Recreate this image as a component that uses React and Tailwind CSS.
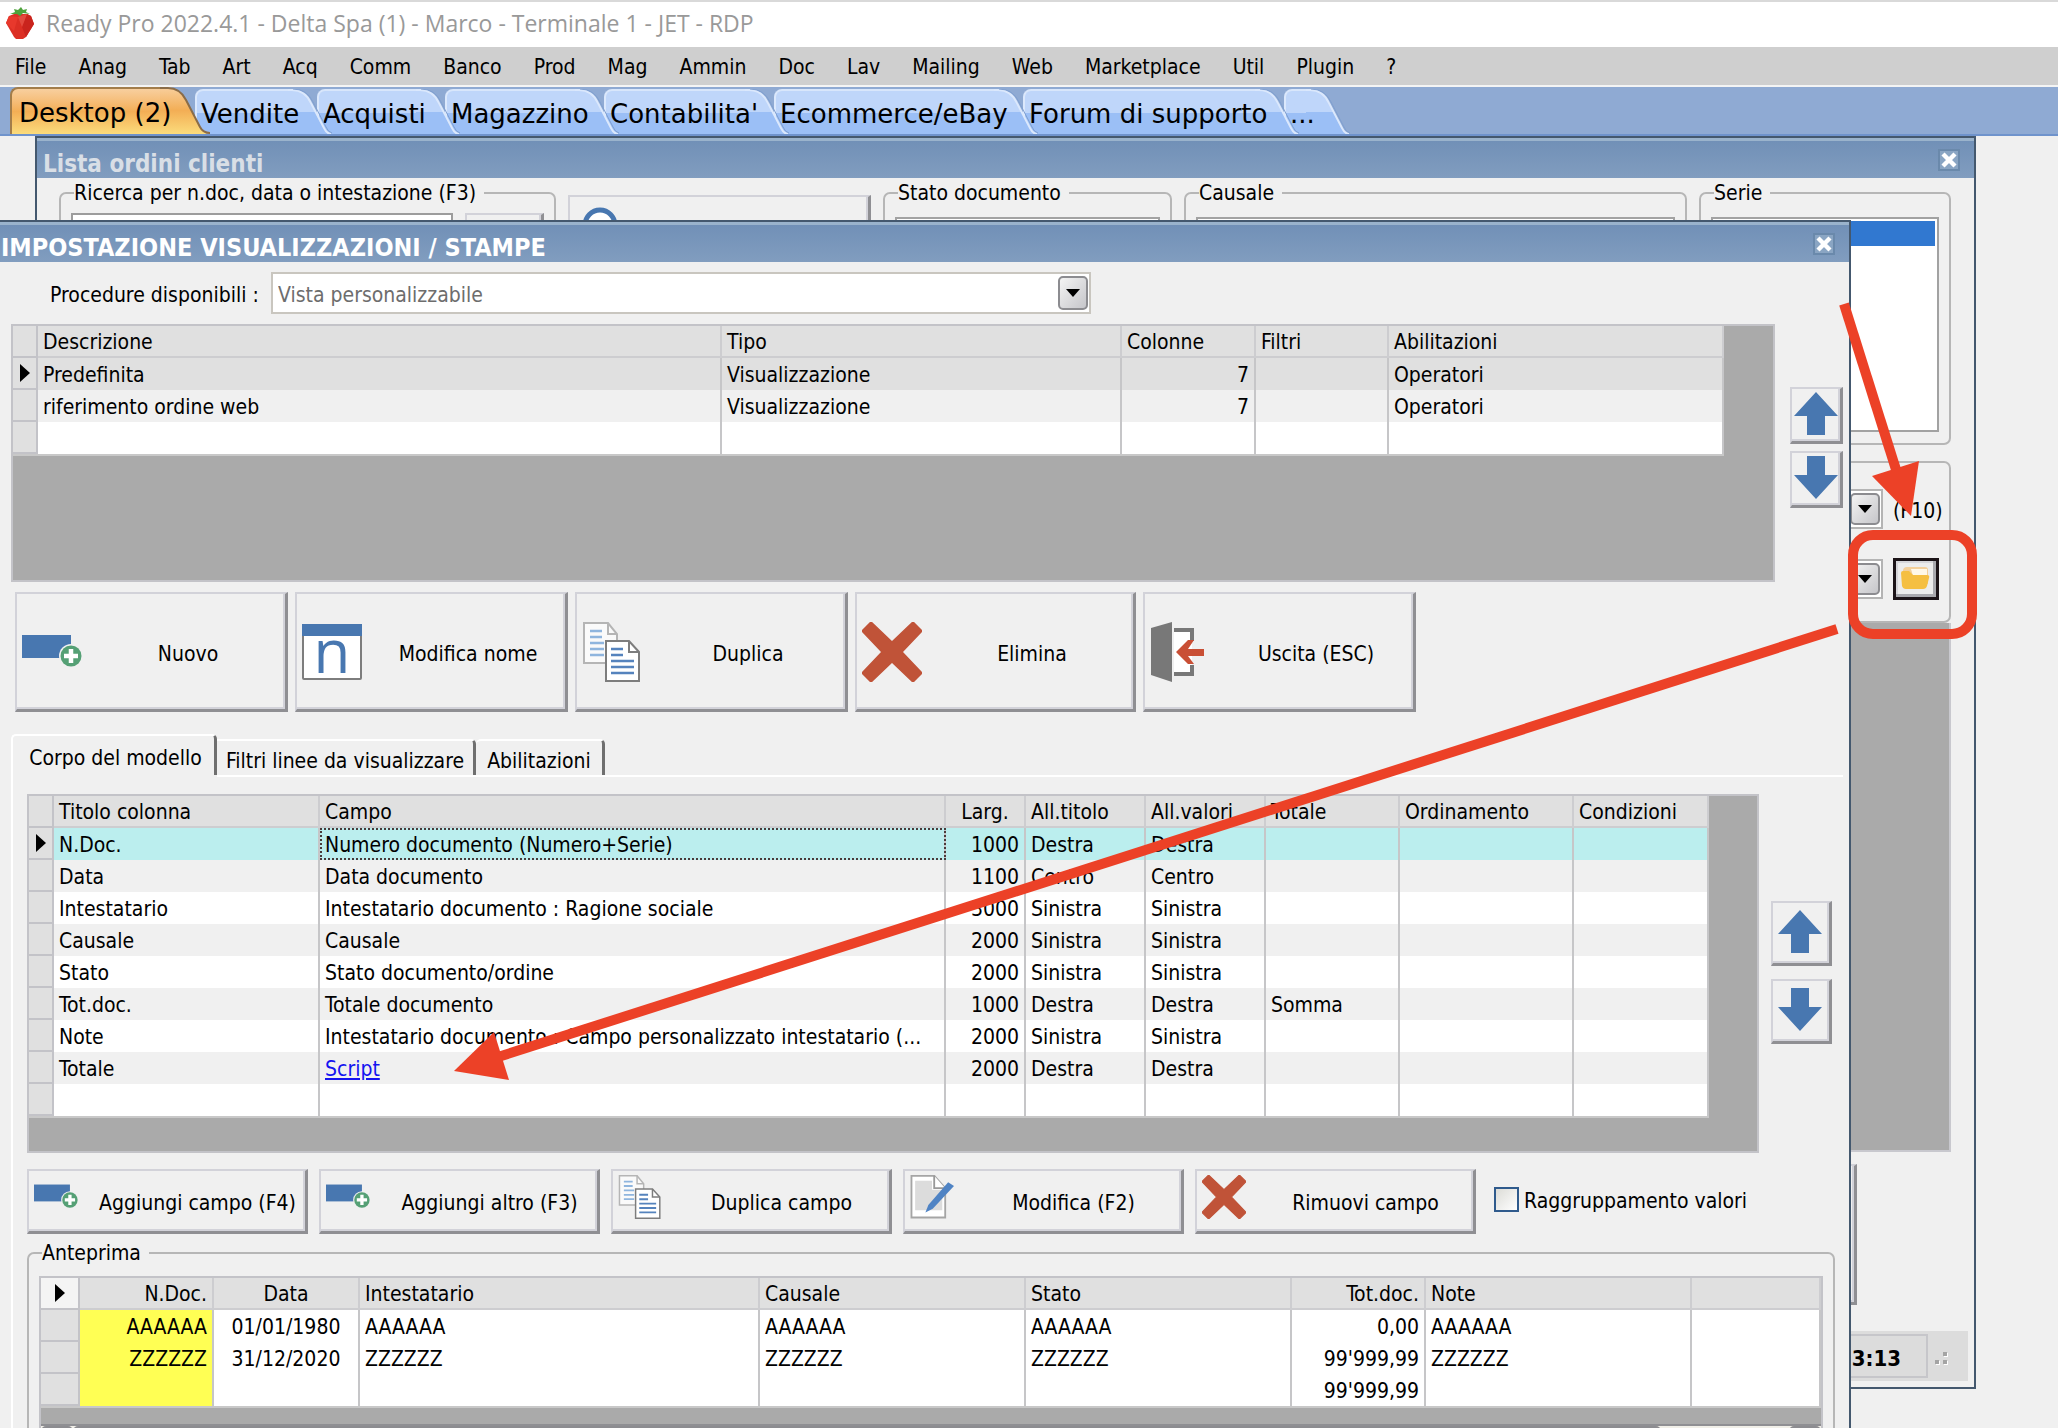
import React from "react";

const menu = ["File", "Anag", "Tab", "Art", "Acq", "Comm", "Banco", "Prod", "Mag", "Ammin", "Doc", "Lav", "Mailing", "Web", "Marketplace", "Util", "Plugin", "?"];

const tabs = [
  { label: "Vendite", width: "z-[8] w-[137px]" },
  { label: "Acquisti", width: "z-[7] w-[143px]" },
  { label: "Magazzino", width: "z-[6] w-[174px]" },
  { label: "Contabilita'", width: "z-[5] w-[185px]" },
  { label: "Ecommerce/eBay", width: "z-[4] w-[264px]" },
  { label: "Forum di supporto", width: "z-[3] w-[276px]" },
  { label: "...", width: "z-[2] w-[66px]" },
];

const views = [
  ["Predefinita", "Visualizzazione", "7", "", "Operatori"],
  ["riferimento ordine web", "Visualizzazione", "7", "", "Operatori"],
  ["", "", "", "", ""],
];

const fields = [
  ["N.Doc.", "Numero documento (Numero+Serie)", "1000", "Destra", "Destra", ""],
  ["Data", "Data documento", "1100", "Centro", "Centro", ""],
  ["Intestatario", "Intestatario documento : Ragione sociale", "3000", "Sinistra", "Sinistra", ""],
  ["Causale", "Causale", "2000", "Sinistra", "Sinistra", ""],
  ["Stato", "Stato documento/ordine", "2000", "Sinistra", "Sinistra", ""],
  ["Tot.doc.", "Totale documento", "1000", "Destra", "Destra", "Somma"],
  ["Note", "Intestatario documento : Campo personalizzato intestatario (...", "2000", "Sinistra", "Sinistra", ""],
  ["Totale", "Script", "2000", "Destra", "Destra", ""],
  ["", "", "", "", "", ""],
];

const preview = [
  ["AAAAAA", "01/01/1980", "AAAAAA", "AAAAAA", "AAAAAA", "0,00", "AAAAAA", ""],
  ["ZZZZZZ", "31/12/2020", "ZZZZZZ", "ZZZZZZ", "ZZZZZZ", "99'999,99", "ZZZZZZ", ""],
  ["", "", "", "", "", "99'999,99", "", ""],
];

/* ---------- icons ---------- */

function Strawberry() {
  return (
    <svg viewBox="0 0 28 32" className="h-8 w-7" aria-hidden="true">
      <path d="M3 9 L8 7 L21 7 L25 9 L28 17 L20 30 L17 32 L10 32 L8 30 L0 16 Z" fill="#dc2f24" />
      <path d="M3 9 L12 10 L8 24 L0 16 Z" fill="#e8382c" />
      <path d="M21 7 L25 9 L28 17 L20 30 L16 20 Z" fill="#c9241d" />
      <path d="M12 10 L21 7 L16 20 Z" fill="#e24a3e" />
      <path d="M4 7 L9 5 L8 2 L12 3 L15 0 L17 3 L21 2 L20 5 L24 7 L17 6 L14 9 L11 7 Z" fill="#4ea33c" />
    </svg>
  );
}

function NewIcon({ className }) {
  return (
    <svg viewBox="0 0 60 60" className={className} aria-hidden="true">
      <rect x="0" y="13" width="49" height="23" fill="#4877b0" />
      <circle cx="49" cy="34" r="12" fill="#f0f0f0" />
      <circle cx="49" cy="34" r="10.5" fill="#55a075" />
      <path d="M49 27v14M42 34h14" stroke="#fff" strokeWidth="4.5" />
    </svg>
  );
}

function RenameIcon({ className }) {
  return (
    <svg viewBox="0 0 60 60" className={className + " overflow-visible"} aria-hidden="true">
      <rect x="1" y="3" width="58" height="54" rx="1" fill="#fff" stroke="#7d7d7d" strokeWidth="2" />
      <rect x="0" y="2" width="60" height="12" fill="#4877b0" />
      <text x="30" y="51" textAnchor="middle" className="font-['Open_Sans','Noto_Sans',sans-serif] text-[60px] font-medium" fill="#4877b0">n</text>
    </svg>
  );
}

function CopyIcon({ className }) {
  return (
    <svg viewBox="0 0 60 60" className={className} aria-hidden="true">
      <path d="M2 1H26L35 12V41H2Z" fill="#fafafa" stroke="#b5b5b5" strokeWidth="2" />
      <path d="M26 1V12H35" fill="none" stroke="#b5b5b5" strokeWidth="2" />
      <path d="M8 9h12M8 15h12M8 21h14M8 27h14M8 33h14" stroke="#8fb5de" strokeWidth="2.4" />
      <path d="M24 19H47L57 30V59H24Z" fill="#fff" stroke="#7d7d7d" strokeWidth="2" />
      <path d="M47 19V30H57" fill="none" stroke="#7d7d7d" strokeWidth="2" />
      <path d="M29 27h12M29 33h12M29 39h23M29 45h23M29 51h23" stroke="#5583bd" strokeWidth="2.6" />
    </svg>
  );
}

function CrossIcon({ className }) {
  return (
    <svg viewBox="0 0 60 60" className={className} aria-hidden="true">
      <path d="M9 0L30 20L51 0L60 9L40 30L60 51L51 60L30 40L9 60L0 51L20 30L0 9Z" fill="#c05338" stroke="#c05338" strokeWidth="1.5" />
    </svg>
  );
}

function ExitIcon({ className }) {
  return (
    <svg viewBox="0 0 60 60" className={className} aria-hidden="true">
      <path d="M24 6H42V54H24Z" fill="#fff" />
      <path d="M24 8H42V19M42 43V52H24" fill="none" stroke="#787878" strokeWidth="4" />
      <path d="M1 6L22 0V60L1 53Z" fill="#787878" />
      <path d="M26 30L38 18H44L38 27H54V34H38L44 42H38Z" fill="#c94f35" />
    </svg>
  );
}

function EditIcon({ className }) {
  return (
    <svg viewBox="0 0 60 60" className={className} aria-hidden="true">
      <path d="M2 1H33L48 18V58H2Z" fill="#fff" stroke="#a5a5a5" strokeWidth="2.5" />
      <path d="M7 8H30V20H44V48H7Z" fill="#dcdcdc" />
      <path d="M33 1V18H48" fill="#fff" stroke="#999" strokeWidth="2.5" />
      <path d="M52 10L60 15L31 46L21 51L25 41Z" fill="#4f83c4" />
    </svg>
  );
}

function MoveArrow({ down }) {
  return (
    <svg viewBox="0 0 44 43" className={down ? "h-[43px] w-11 rotate-180" : "h-[43px] w-11"} aria-hidden="true">
      <path d="M22 0L44 24H31V43H13V24H0Z" fill="#4877b0" />
    </svg>
  );
}

function FolderIcon() {
  return (
    <svg viewBox="0 0 30 24" className="h-6 w-[30px]" aria-hidden="true">
      <path d="M3 5Q3 1 7 1H25Q28 1 28 4V18H3Z" fill="#f3cf9a" />
      <path d="M11 3H27V10H13Z" fill="#fff8e8" />
      <path d="M1 7Q1 5 3 5H9L13 9H27Q30 9 29 12L27 20Q26 23 23 23H6Q3 23 2 20Z" fill="#f5bf42" />
    </svg>
  );
}

function RowMarker() {
  return (
    <svg viewBox="0 0 10 18" className="mx-auto h-[18px] w-[10px]" aria-hidden="true">
      <path d="M0 0L10 9L0 18Z" fill="#000" />
    </svg>
  );
}

/* ---------- shared parts ---------- */

const raised = "border-t-2 border-l-2 border-r-[3px] border-b-[3px] border-t-[#d2d2d9] border-l-[#d2d2d9] border-r-[#8f8f93] border-b-[#8f8f93] bg-[#f0f0f0] shadow-[inset_-2px_-2px_0_#d2d2d9]";

function TitleBar({ title, className }) {
  return (
    <header className="flex h-10 items-center justify-between border-t-[3px] border-[#9ab3cc] bg-linear-to-b from-[#7190b7] to-[#819dbf] pr-[14px]">
      <h2 className={"pt-2 font-bold whitespace-nowrap " + className}>{title}</h2>
      <button type="button" aria-label={"Chiudi " + title} className="flex h-[22px] w-[22px] items-center justify-center border-2 border-[#6a89ab] bg-[#8aa5c3]">
        <svg viewBox="0 0 16 16" className="h-4 w-4" aria-hidden="true">
          <path d="M2 2L14 14M14 2L2 14" stroke="#fff" strokeWidth="4.4" />
        </svg>
      </button>
    </header>
  );
}

function DropButton({ label, className }) {
  return (
    <button type="button" aria-label={label} className={"flex shrink-0 items-center justify-center rounded-[5px] border-2 border-[#8c8c90] bg-linear-to-br from-[#f4f4f4] to-[#c6c6ca] " + className}>
      <svg viewBox="0 0 14 8" className="h-2 w-[14px]" aria-hidden="true">
        <path d="M0 0H14L7 8Z" fill="#000" />
      </svg>
    </button>
  );
}

function Group({ legend, className, children }) {
  return (
    <fieldset className={"min-w-0 rounded-[7px] border-2 border-[#b6b6b6] px-[10px] " + className}>
      {legend && <legend className="ml-[3px] pr-2 leading-6">{legend}</legend>}
      {children}
    </fieldset>
  );
}

function BigButton({ icon: Icon, label, width = "w-[273px]" }) {
  return (
    <button type="button" className={"flex h-[120px] items-center pl-[5px] " + width + " " + raised}>
      <Icon className="h-[60px] w-[60px] shrink-0" />
      <span className="flex-1 pt-[5px] pl-[9px] text-center">{label}</span>
    </button>
  );
}

function SmallButton({ icon: Icon, label }) {
  return (
    <button type="button" className={"flex h-[65px] w-[281px] items-center pl-[5px] " + raised}>
      <Icon className="mt-1 h-11 w-11 shrink-0 self-start" />
      <span className="flex-1 pt-[3px] pl-[12px] text-center whitespace-nowrap">{label}</span>
    </button>
  );
}

function MoveButtons({ className, size, what }) {
  return (
    <div className={"flex shrink-0 flex-col " + className}>
      <button type="button" aria-label={"Sposta su " + what} className={"flex items-center justify-center pb-[3px] " + size + " " + raised}>
        <MoveArrow />
      </button>
      <button type="button" aria-label={"Sposta giù " + what} className={"flex items-center justify-center pb-[3px] " + size + " " + raised}>
        <MoveArrow down />
      </button>
    </div>
  );
}

const th = "h-8 border-r-2 border-b-2 border-[#cdcdd0] bg-[#e0e0e0] px-[5px] pt-[2px] font-normal";
const td = "h-8 border-r-2 border-[#c6c6c8] px-[5px] pt-[2px] whitespace-nowrap";
const rowHead = "h-8 border-r-2 border-b-2 border-[#c3c3c8] bg-[#e0e0e0] p-0";
const tableBase = "table-fixed border-separate border-spacing-0 border-b-2 border-[#c8c8c8] leading-6";

/* ---------- windows ---------- */

function OrdersWindow() {
  return (
    <section className="absolute top-0 right-[82px] left-[35px] border-2 border-[#44586e] bg-[#f0f0f0]">
      <TitleBar title="Lista ordini clienti" className="pl-[6px] text-[24px] text-[#d9dfe6]" />
      <div className="pt-[3px] pr-[23px] pl-[22px]">
        <div className="flex gap-3">
          <Group legend="Ricerca per n.doc, data o intestazione (F3)" className="h-[264px] w-[497px] shrink-0">
            <div className="flex gap-3 pt-2">
              <input aria-label="Ricerca" className="h-9 w-[385px] border-2 border-[#9c9c9c] bg-white" />
              <button type="button" aria-label="Cerca" className={"h-9 w-[80px] " + raised} />
            </div>
          </Group>
          <button type="button" aria-label="Avvia ricerca" className={"mt-[14px] flex h-[250px] w-[303px] shrink-0 items-start pt-[10px] pl-3 " + raised}>
            <svg viewBox="0 0 36 36" className="h-9 w-9" aria-hidden="true">
              <circle cx="18" cy="18" r="15" fill="#fff" stroke="#4877b0" strokeWidth="5" />
            </svg>
          </button>
          <Group legend="Stato documento" className="h-[264px] w-[289px] shrink-0">
            <div className="mt-3 h-[215px] border-2 border-[#a2a2a2] bg-white" />
          </Group>
          <Group legend="Causale" className="h-[264px] flex-1">
            <div className="mt-3 h-[215px] border-2 border-[#a2a2a2] bg-white" />
          </Group>
          <Group legend="Serie" className="h-[264px] w-[252px] shrink-0">
            <div className="mt-3 h-[215px] border-2 border-[#a2a2a2] bg-white p-[2px]">
              <div className="h-[25px] bg-[#3178d0]" />
            </div>
          </Group>
        </div>
        <Group className="mt-4 flex h-[162px] flex-col gap-[30px] pt-[26px]">
          <div className="flex h-10 items-center gap-[10px]">
            <div className="flex h-10 flex-1 items-center justify-end border-2 border-[#b4b4b4] bg-white pr-[1px]">
              <DropButton label="Apri elenco stampe" className="h-8 w-[30px]" />
            </div>
            <span className="w-[46px] pt-[3px] whitespace-nowrap">(F10)</span>
          </div>
          <div className="flex h-10 items-center gap-[10px]">
            <div className="flex h-10 flex-1 items-center justify-end border-2 border-[#b4b4b4] bg-white pr-[1px]">
              <DropButton label="Apri elenco viste" className="h-8 w-[30px]" />
            </div>
            <button type="button" aria-label="Apri impostazioni vista" className="flex h-[42px] w-[46px] items-center justify-center border-[3px] border-[#1c1418] bg-[#ececec] pr-[2px] pb-[3px] shadow-[inset_-3px_-3px_0_#a9a9ae,inset_2px_2px_0_#d6d6da]">
              <FolderIcon />
            </button>
          </div>
        </Group>
        <div className="h-[529px] border-r-2 border-b-2 border-[#c8c8ce] bg-[#aaaaaa]" />
        <button type="button" aria-label="Azioni" className={"mt-3 block h-[141px] w-[1798px] " + raised} />
      </div>
      <footer className="mx-[6px] mt-[26px] mb-[6px] flex h-[50px] items-center justify-end bg-[#dcdcdc]">
        <span className="flex h-11 w-[200px] items-center justify-end border-2 border-[#c6c6ca] pt-[6px] pr-[25px] text-[22px] font-bold">13:13</span>
        <svg viewBox="0 0 40 20" className="h-5 w-10" aria-hidden="true">
          <path d="M8 15h4v4h-4zM16 7h4v4h-4zM16 15h4v4h-4z" fill="#fff" />
          <path d="M7 14h4v4h-4zM15 6h4v4h-4zM15 14h4v4h-4z" fill="#a4a4a4" />
        </svg>
      </footer>
    </section>
  );
}

function ViewsTable() {
  return (
    <div className="h-[258px] flex-1 border-2 border-[#c3c3c8] bg-[#aaaaaa]">
      <table className={tableBase}>
        <colgroup>
          <col className="w-[25px]" /><col className="w-[684px]" /><col className="w-[400px]" /><col className="w-[134px]" /><col className="w-[133px]" /><col className="w-[335px]" />
        </colgroup>
        <thead>
          <tr className="text-left">
            <td className={rowHead} />
            <th className={th}>Descrizione</th><th className={th}>Tipo</th><th className={th}>Colonne</th><th className={th}>Filtri</th><th className={th}>Abilitazioni</th>
          </tr>
        </thead>
        <tbody>
          {views.map((r, i) => (
            <tr key={i} className={i === 0 ? "bg-[#e0e0e0]" : i === 1 ? "bg-[#f0f0f0]" : "bg-white"}>
              <td className={rowHead}>{i === 0 && <RowMarker />}</td>
              {r.map((c, j) => (
                <td key={j} className={j === 2 ? td + " text-right" : td}>{c}</td>
              ))}
            </tr>
          ))}
        </tbody>
      </table>
    </div>
  );
}

function FieldsTable() {
  return (
    <div className="h-[359px] flex-1 border-2 border-[#c3c3c8] bg-[#aaaaaa]">
      <table className={tableBase}>
        <colgroup>
          <col className="w-[25px]" /><col className="w-[266px]" /><col className="w-[626px]" /><col className="w-[80px]" /><col className="w-[120px]" /><col className="w-[120px]" /><col className="w-[134px]" /><col className="w-[174px]" /><col className="w-[135px]" />
        </colgroup>
        <thead>
          <tr className="text-left">
            <td className={rowHead} />
            <th className={th}>Titolo colonna</th><th className={th}>Campo</th><th className={th + " text-center"}>Larg.</th><th className={th}>All.titolo</th><th className={th}>All.valori</th><th className={th}>Totale</th><th className={th}>Ordinamento</th><th className={th}>Condizioni</th>
          </tr>
        </thead>
        <tbody>
          {fields.map((r, i) => (
            <tr key={i} className={i === 0 ? "bg-[#bbeeee]" : i % 2 ? "bg-[#f0f0f0]" : "bg-white"}>
              <td className={rowHead}>{i === 0 && <RowMarker />}</td>
              <td className={td}>{r[0]}</td>
              <td className={i === 0 ? td + " outline-2 -outline-offset-2 outline-dotted outline-[#4a3a3a]" : td}>
                {r[1] === "Script" ? <a href="#script" className="text-[#1414f0] underline decoration-2 underline-offset-2">Script</a> : r[1]}
              </td>
              <td className={td + " text-right"}>{r[2]}</td>
              <td className={td}>{r[3]}</td>
              <td className={td}>{r[4]}</td>
              <td className={td}>{r[5]}</td>
              <td className={td} />
              <td className={td} />
            </tr>
          ))}
        </tbody>
      </table>
    </div>
  );
}

const previewAlign = ["text-right", "text-center", "", "", "", "text-right", "", ""];

function PreviewTable() {
  return (
    <div className="mt-[11px] border-2 border-[#c3c3c8] bg-[#aaaaaa]">
      <table className={tableBase + " w-full"}>
        <colgroup>
          <col className="w-[39px]" /><col className="w-[134px]" /><col className="w-[146px]" /><col className="w-[400px]" /><col className="w-[266px]" /><col className="w-[266px]" /><col className="w-[134px]" /><col className="w-[266px]" /><col />
        </colgroup>
        <thead>
          <tr className="text-left">
            <td className="h-8 border-r-2 border-b-2 border-[#c3c3c8] bg-[#f4f4f4] p-0"><RowMarker /></td>
            <th className={th + " text-right"}>N.Doc.</th><th className={th + " text-center"}>Data</th><th className={th}>Intestatario</th><th className={th}>Causale</th><th className={th}>Stato</th><th className={th + " text-right"}>Tot.doc.</th><th className={th}>Note</th><td className={th} />
          </tr>
        </thead>
        <tbody>
          {preview.map((r, i) => (
            <tr key={i} className="bg-white">
              <td className={rowHead} />
              {r.map((c, j) => (
                <td key={j} className={td + " " + previewAlign[j] + (j === 0 ? " bg-[#ffff54]" : "")}>{c}</td>
              ))}
            </tr>
          ))}
        </tbody>
      </table>
      <div className="h-4" />
      <div className="flex h-8 justify-between border-t-2 border-[#8f8f93] bg-[#f1efe8]">
        <button type="button" aria-label="Scorri a sinistra" className="w-8 rounded-[5px] border-2 border-[#8c8c90] bg-white" />
        <div className="w-[1588px] rounded-[5px] border-2 border-[#8c8c90] bg-[#f0f0f0]" />
        <div className="flex-1" />
        <button type="button" aria-label="Scorri a destra" className="w-8 rounded-[5px] border-2 border-[#8c8c90] bg-white" />
      </div>
    </div>
  );
}

function ViewSettingsWindow() {
  return (
    <section className="absolute top-[84px] right-[207px] -left-1 border-2 border-[#44586e] bg-[#f0f0f0]">
      <TitleBar title="IMPOSTAZIONE VISUALIZZAZIONI / STAMPE" className="pl-[3px] text-[25px] text-white" />
      <div className="pr-[6px] pl-[13px]">
        <div className="mt-[10px] flex h-[42px] items-center pl-[39px]">
          <label htmlFor="procedure" className="w-[221px] shrink-0 pt-[3px] whitespace-nowrap">Procedure disponibili :</label>
          <div className="flex h-[42px] w-[820px] items-center border-2 border-[#c9c6bf] bg-white pr-[1px]">
            <input id="procedure" readOnly value="Vista personalizzabile" className="min-w-0 flex-1 bg-transparent pt-[3px] pl-[5px] text-[#6d6d6d] outline-none" />
            <DropButton label="Apri elenco procedure" className="h-[34px] w-[30px]" />
          </div>
        </div>

        <div className="mt-[10px] flex gap-[15px]">
          <ViewsTable />
          <MoveButtons className="w-[53px] gap-[7px] pt-[63px]" size="h-[57px]" what="vista" />
        </div>

        <div className="mt-[10px] flex gap-[7px] pl-1">
          <BigButton icon={NewIcon} label="Nuovo" />
          <BigButton icon={RenameIcon} label="Modifica nome" />
          <BigButton icon={CopyIcon} label="Duplica" />
          <BigButton icon={CrossIcon} label="Elimina" width="w-[281px]" />
          <BigButton icon={ExitIcon} label="Uscita (ESC)" />
        </div>

        <div className="mt-[22px] flex items-end" role="tablist">
          <button type="button" role="tab" aria-selected="true" className="h-[41px] w-[206px] rounded-t-[5px] border-t-2 border-l-2 border-r-[3px] border-t-white border-l-white border-r-[#6f6f6f] pt-1 pl-1">Corpo del modello</button>
          <button type="button" role="tab" aria-selected="false" className="h-9 w-[259px] rounded-tr-[5px] border-t-2 border-r-[3px] border-t-white border-r-[#6f6f6f] pt-[5px]">Filtri linee da visualizzare</button>
          <button type="button" role="tab" aria-selected="false" className="h-9 w-[129px] rounded-t-[5px] border-t-2 border-r-[3px] border-t-white border-r-[#6f6f6f] pt-[5px]">Abilitazioni</button>
        </div>
        <div className="flex h-[2px]">
          <div className="w-[206px] border-l-2 border-white" />
          <div className="flex-1 bg-white" />
        </div>

        <div role="tabpanel" className="border-l-2 border-white pt-[17px] pr-2 pl-[14px]">
          <div className="flex gap-3 pr-[3px]">
            <FieldsTable />
            <MoveButtons className="w-[61px] gap-[13px] pt-[107px]" size="h-[65px] pr-[3px]" what="campo" />
          </div>

          <div className="mt-4 flex gap-[11px]">
            <SmallButton icon={NewIcon} label="Aggiungi campo (F4)" />
            <SmallButton icon={NewIcon} label="Aggiungi altro (F3)" />
            <SmallButton icon={CopyIcon} label="Duplica campo" />
            <SmallButton icon={EditIcon} label="Modifica (F2)" />
            <SmallButton icon={CrossIcon} label="Rimuovi campo" />
            <label className="flex items-center gap-[5px] pb-1 pl-[7px]">
              <input type="checkbox" className="h-[25px] w-[25px] appearance-none border-2 border-[#2f5a8c] bg-linear-to-br from-[#dcdcd7] to-white" />
              <span className="pt-[2px] whitespace-nowrap">Raggruppamento valori</span>
            </label>
          </div>

          <Group legend="Anteprima" className="mt-[7px] pb-4">
            <PreviewTable />
          </Group>
        </div>
      </div>
    </section>
  );
}

/* ---------- main tabs ---------- */

function MainTab({ label, width }) {
  return (
    <button type="button" role="tab" aria-selected="false" className={"relative -ml-[15px] flex h-[45px] shrink-0 items-center pt-[5px] pl-[6px] text-[26px] whitespace-nowrap " + width}>
      <span className="absolute inset-0 flex">
        <span className="flex-1 rounded-tl-[8px] border-t-2 border-l-2 border-t-[#d8e6fb] border-l-[#dbe8fc] bg-linear-to-b from-[#bfd6fa] from-50% to-[#9bbff6] to-52%" />
        <svg viewBox="0 0 44 45" className="h-[45px] w-11 shrink-0" aria-hidden="true">
          <path d="M0 0H4Q17 1 23 14L36 39Q39 45 44 45H0Z" fill="#bfd6fa" />
          <path d="M0 23H28L36 39Q39 45 44 45H0Z" fill="#9bbff6" />
          <path d="M0 1H4Q17 1 23 14L36 39Q39 45 43 45" fill="none" stroke="#dbe8fc" strokeWidth="2" />
          <path d="M5 0Q19 0 25 13L38 38Q40 43 44 44" fill="none" stroke="#7f9fd0" strokeWidth="1" />
        </svg>
      </span>
      <span className="relative">{label}</span>
    </button>
  );
}

function ActiveTab() {
  return (
    <button type="button" role="tab" aria-selected="true" className="relative z-10 flex h-[47px] w-[200px] shrink-0 items-center pt-[5px] pl-[9px] text-[26px] whitespace-nowrap">
      <span className="absolute inset-0 flex">
        <span className="flex-1 rounded-tl-[8px] border-t-2 border-l-2 border-[#a37d4a] bg-linear-to-b from-[#f8cf9e] via-[#f3ae55] via-50% to-[#fbdc7c]" />
        <svg viewBox="0 0 50 47" className="h-[47px] w-[50px] shrink-0" aria-hidden="true">
          <defs>
            <linearGradient id="active-tab" x1="0" y1="0" x2="0" y2="1">
              <stop offset="0" stopColor="#f8cf9e" />
              <stop offset=".5" stopColor="#f3ae55" />
              <stop offset="1" stopColor="#fbdc7c" />
            </linearGradient>
          </defs>
          <path d="M0 0H8Q20 1 26 13L40 40Q43 46 50 47H0Z" fill="url(#active-tab)" />
          <path d="M0 1H8Q20 1 26 13L40 40Q43 46 50 46" fill="none" stroke="#8a6c48" strokeWidth="2" />
        </svg>
      </span>
      <span className="relative">Desktop (2)</span>
    </button>
  );
}

/* ---------- annotations drawn over the desktop ---------- */

function Annotations() {
  return (
    <svg width="2058" height="1428" viewBox="0 0 2058 1428" className="pointer-events-none absolute top-0 left-0 z-20 max-w-none" aria-hidden="true">
      <g stroke="#ec4127" fill="none">
        <path d="M1844 304L1898 476" strokeWidth="10" />
        <path d="M1837 629L498 1057" strokeWidth="10" />
        <rect x="1853" y="535" width="119" height="99" rx="20" strokeWidth="10" />
      </g>
      <path d="M1911 516L1872 476L1919 461Z" fill="#ec4127" />
      <path d="M454 1071L494 1032L509 1080Z" fill="#ec4127" />
    </svg>
  );
}

export default function App() {
  return (
    <div className="relative flex h-screen flex-col overflow-hidden bg-[#f0f0f0] font-['DejaVu_Sans_Condensed','Noto_Sans',sans-serif] text-[21px] leading-6 text-black">
      <header className="flex h-[47px] shrink-0 items-center gap-3 border-t-2 border-[#d9d9d9] bg-white pb-[3px] pl-[6px]">
        <Strawberry />
        <h1 className="font-['Open_Sans','Noto_Sans',sans-serif] text-[23px] text-[#999999]">Ready Pro 2022.4.1 - Delta Spa (1) - Marco - Terminale 1 - JET - RDP</h1>
      </header>
      <nav className="flex h-[38px] shrink-0 items-center gap-8 bg-[#cfcfcf] pt-[2px] pl-[15px]" aria-label="Menu principale">
        {menu.map((m) => (
          <button key={m} type="button">{m}</button>
        ))}
      </nav>
      <div className="isolate flex h-[51px] shrink-0 items-end border-t-2 border-b-2 border-t-[#f4f4f4] border-b-[#6f93cc] bg-[#8faad3] pl-[10px] font-['DejaVu_Sans',sans-serif]" role="tablist">
        <ActiveTab />
        {tabs.map((t) => (
          <MainTab key={t.label} label={t.label} width={t.width} />
        ))}
      </div>
      <main className="relative flex-1">
        <OrdersWindow />
        <ViewSettingsWindow />
      </main>
      <Annotations />
    </div>
  );
}
